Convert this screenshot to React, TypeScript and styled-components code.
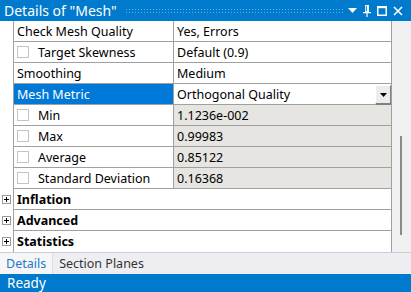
import styled, { createGlobalStyle } from "styled-components";

const GlobalStyle = createGlobalStyle`
  html, body {
    margin: 0;
    padding: 0;
    background: #fff;
  }
  body {
    font-family: "Noto Sans", "Open Sans", sans-serif;
  }
`;

const Panel = styled.div`
  display: flex;
  flex-direction: column;
  width: 411px;
  height: 292px;
  overflow: hidden;
  background: #fff;
`;

const TitleBar = styled.div`
  display: flex;
  align-items: center;
  height: 21px;
  padding-left: 4px;
  background: #007acc;
  color: #fff;
  font-size: 14px;
`;

const TitleText = styled.span`
  white-space: nowrap;
  line-height: 21px;
`;

const Dots = styled.div`
  flex: 1;
  height: 6px;
  margin: 0 4px 0 8px;
  background-image: radial-gradient(circle, rgba(120, 185, 232, 0.9) 0.7px, transparent 0.9px);
  background-size: 3px 3px;
`;

const TitleIcons = styled.div`
  display: flex;
  align-items: center;
  gap: 6px;
  padding-right: 8px;

  svg {
    display: block;
  }
`;

const Body = styled.div`
  display: flex;
  height: 231px;
`;

const Grid = styled.div`
  width: 392px;
  display: flex;
  flex-direction: column;
`;

const Row = styled.div`
  display: grid;
  grid-template-columns: 13px 160px 1fr;
  height: 21px;
`;

const Gutter = styled.div`
  display: flex;
  align-items: center;
  justify-content: center;
`;

const NameCell = styled.div<{ $selected?: boolean }>`
  display: flex;
  align-items: center;
  gap: 9px;
  padding-left: 3px;
  border-left: 1px solid #a0a0a0;
  border-bottom: 1px solid #a0a0a0;
  background: ${(p) => (p.$selected ? "#0078d7" : "#fff")};
  color: ${(p) => (p.$selected ? "#fff" : "#000")};
  font-size: 12.5px;
  white-space: nowrap;
`;

const ValueCell = styled.div<{ $readonly?: boolean }>`
  position: relative;
  display: flex;
  align-items: center;
  padding-left: 3px;
  border-left: 1px solid #a0a0a0;
  border-right: 1px solid #a0a0a0;
  border-bottom: 1px solid #a0a0a0;
  background: ${(p) => (p.$readonly ? "#e6e5e1" : "#fff")};
  font-size: 12.5px;
  white-space: nowrap;
`;

const CategoryCell = styled.div<{ $last?: boolean }>`
  grid-column: 2 / 4;
  display: flex;
  align-items: center;
  padding-left: 3px;
  border-left: 1px solid #a0a0a0;
  border-right: 1px solid #a0a0a0;
  border-bottom: ${(p) => (p.$last ? "none" : "1px solid #a0a0a0")};
  font-size: 12.5px;
  font-weight: bold;
`;

const Check = styled.span`
  width: 10px;
  height: 10px;
  border: 1px solid #c4c4c4;
  background: #fff;
  flex-shrink: 0;
`;

const Expander = styled.span`
  position: relative;
  width: 9px;
  height: 9px;
  box-sizing: border-box;
  border: 1px solid #999;
  background: #fff;

  &::before,
  &::after {
    content: "";
    position: absolute;
    background: #000;
  }
  &::before {
    left: 1px;
    right: 1px;
    top: 3px;
    height: 1px;
  }
  &::after {
    top: 1px;
    bottom: 1px;
    left: 3px;
    width: 1px;
  }
`;

const DropButton = styled.div`
  position: absolute;
  right: 0;
  top: 1px;
  width: 14px;
  height: 17px;
  display: flex;
  align-items: center;
  justify-content: center;
  background: #ececec;
  border-right: 1px solid #808080;
  border-bottom: 2px solid #808080;
  border-top: 1px solid #fff;
  border-left: 1px solid #fff;
`;

const ScrollTrack = styled.div`
  flex: 1;
  position: relative;
  background: #f0f0f0;
`;

const ScrollThumb = styled.div`
  position: absolute;
  left: 8px;
  top: 115px;
  width: 2px;
  height: 99px;
  background: #8a8a8a;
`;

const TabBar = styled.div`
  display: flex;
  height: 21px;
  border-top: 1px solid #ccccdc;
  background: #eeeef2;
  font-size: 12.5px;
`;

const Tab = styled.div<{ $active?: boolean }>`
  display: flex;
  align-items: center;
  padding: 0 6px;
  background: ${(p) => (p.$active ? "#f6f6f6" : "transparent")};
  color: ${(p) => (p.$active ? "#1c79cf" : "#333")};
  border-right: ${(p) => (p.$active ? "1px solid #dcdce4" : "none")};
`;

const StatusBar = styled.div`
  flex: 1;
  display: flex;
  align-items: center;
  padding-left: 7px;
  background: #007acc;
  color: #fff;
  font-size: 13.5px;
`;

type Prop = {
  name: string;
  value: string;
  check?: boolean;
  readonly?: boolean;
  selected?: boolean;
  dropdown?: boolean;
};

const props: Prop[] = [
  { name: "Check Mesh Quality", value: "Yes, Errors" },
  { name: "Target Skewness", value: "Default (0.9)", check: true },
  { name: "Smoothing", value: "Medium" },
  { name: "Mesh Metric", value: "Orthogonal Quality", selected: true, dropdown: true },
  { name: "Min", value: "1.1236e-002", check: true, readonly: true },
  { name: "Max", value: "0.99983", check: true, readonly: true },
  { name: "Average", value: "0.85122", check: true, readonly: true },
  { name: "Standard Deviation", value: "0.16368", check: true, readonly: true },
];

const categories = ["Inflation", "Advanced", "Statistics"];

function App() {
  return (
    <>
      <GlobalStyle />
      <Panel>
        <TitleBar>
          <TitleText>Details of "Mesh"</TitleText>
          <Dots />
          <TitleIcons>
            <svg width="9" height="6" viewBox="0 0 9 6">
              <path d="M0 0h9L4.5 5z" fill="#fff" />
            </svg>
            <svg width="8" height="12" viewBox="0 0 8 12">
              <path d="M2 0h4v7H2z M2.8 0.8v5.4h1V0.8z" fill="#fff" fillRule="evenodd" />
              <path d="M0 7h8v1.2H0z M3.4 8h1.2v4H3.4z" fill="#fff" />
            </svg>
            <svg width="10" height="10" viewBox="0 0 10 10">
              <rect x="0.75" y="0.75" width="8.5" height="8.5" fill="none" stroke="#fff" strokeWidth="1.5" />
              <rect x="0" y="0" width="10" height="2.2" fill="#fff" />
            </svg>
            <svg width="10" height="10" viewBox="0 0 10 10">
              <path d="M1 1l8 8M9 1l-8 8" stroke="#fff" strokeWidth="1.6" />
            </svg>
          </TitleIcons>
        </TitleBar>

        <Body>
          <Grid>
            {props.map((p) => (
              <Row key={p.name}>
                <Gutter />
                <NameCell $selected={p.selected}>
                  {p.check && <Check />}
                  <span>{p.name}</span>
                </NameCell>
                <ValueCell $readonly={p.readonly}>
                  {p.value}
                  {p.dropdown && (
                    <DropButton>
                      <svg width="7" height="4" viewBox="0 0 7 4">
                        <path d="M0 0h7L3.5 4z" fill="#000" />
                      </svg>
                    </DropButton>
                  )}
                </ValueCell>
              </Row>
            ))}
            {categories.map((c, i) => (
              <Row key={c}>
                <Gutter>
                  <Expander />
                </Gutter>
                <CategoryCell $last={i === categories.length - 1}>{c}</CategoryCell>
              </Row>
            ))}
          </Grid>
          <ScrollTrack>
            <ScrollThumb />
          </ScrollTrack>
        </Body>

        <TabBar>
          <Tab $active>Details</Tab>
          <Tab>Section Planes</Tab>
        </TabBar>

        <StatusBar>Ready</StatusBar>
      </Panel>
    </>
  );
}

export default App;
